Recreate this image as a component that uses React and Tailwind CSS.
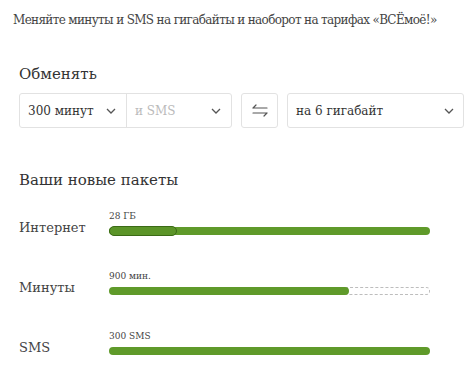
import React from "react";

const font = { fontFamily: '"DejaVu Serif", serif' };

function Chevron({ className = "" }) {
  return (
    <svg width="10" height="6" viewBox="0 0 10 6" className={className}>
      <path d="M1 1l4 4 4-4" fill="none" stroke="#555" strokeWidth="1.3" />
    </svg>
  );
}

function SwapIcon() {
  return (
    <svg width="18" height="16" viewBox="0 0 18 16">
      <path d="M2 5h14M2 5l3-3" fill="none" stroke="#555" strokeWidth="1.2" strokeLinecap="round" />
      <path d="M16 10H2M16 10l-3 3" fill="none" stroke="#555" strokeWidth="1.2" strokeLinecap="round" />
    </svg>
  );
}

function Row({ label, value, children }) {
  return (
    <div className="flex items-end h-[60px]">
      <div className="w-[90px] text-[13px] text-[#444] leading-none pb-[1px]">{label}</div>
      <div className="w-[321px] flex flex-col">
        <div className="text-[9px] text-[#444] leading-none mb-[6px]">{value}</div>
        {children}
      </div>
    </div>
  );
}

export default function App() {
  return (
    <div className="w-[474px] h-[374px] bg-white" style={font}>
      <div className="pl-[13px] pt-[13px] text-[12px] leading-[14px] text-[#444] tracking-[-0.65px]">
        Меняйте минуты и SMS на гигабайты и наоборот на тарифах «ВСЁмоё!»
      </div>
      <div className="pl-[19px] pt-[38px] text-[15px] leading-[18px] text-[#333]">Обменять</div>
      <div className="flex pl-[19px] pt-[10px] gap-[9px]">
        <div className="flex h-[35px] border border-[#e2e2e2] rounded-[3px] w-[213px]">
          <div className="flex items-center justify-between w-[107px] pl-[8px] pr-[10px] border-r border-[#e2e2e2] text-[12px] text-[#333]">
            <span>300 минут</span>
            <Chevron />
          </div>
          <div className="flex items-center justify-between flex-1 pl-[8px] pr-[10px] text-[12px] text-[#bbb]">
            <span>и SMS</span>
            <Chevron />
          </div>
        </div>
        <div className="flex items-center justify-center w-[37px] h-[35px] border border-[#e2e2e2] rounded-[3px]">
          <SwapIcon />
        </div>
        <div className="flex items-center justify-between w-[177px] h-[35px] border border-[#e2e2e2] rounded-[3px] pl-[8px] pr-[9px] text-[12px] text-[#333]">
          <span>на 6 гигабайт</span>
          <Chevron />
        </div>
      </div>
      <div className="pl-[19px] pt-[43px] text-[15px] leading-[18px] text-[#333]">Ваши новые пакеты</div>
      <div className="pl-[19px] mt-[-14px] flex flex-col">
        <Row label="Интернет" value="28 ГБ">
          <div className="relative h-[8px] rounded-full bg-[#5f9a2a]">
            <div className="absolute left-0 top-[-1px] h-[10px] w-[68px] rounded-full bg-[#5b9428] border-[1.5px] border-[#3b6a16]" />
          </div>
        </Row>
        <Row label="Минуты" value="900 мин.">
          <div className="flex h-[8px]">
            <div className="w-[240px] h-full rounded-full bg-[#5f9a2a] relative z-10" />
            <div className="flex-1 h-full ml-[-4px] rounded-r-full border border-dashed border-[#bdbdbd]" />
          </div>
        </Row>
        <Row label="SMS" value="300 SMS">
          <div className="h-[8px] rounded-full bg-[#5f9a2a]" />
        </Row>
      </div>
    </div>
  );
}
